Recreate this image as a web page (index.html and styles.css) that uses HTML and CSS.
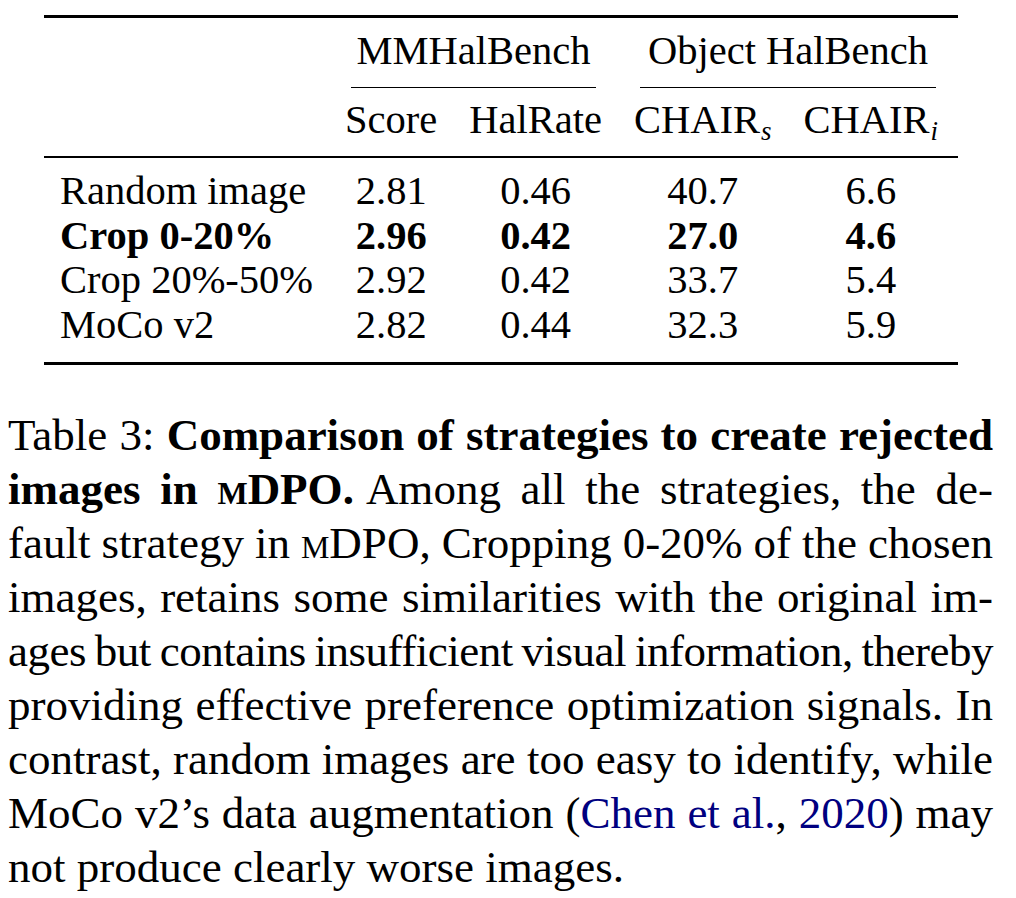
FILE: index.html
```html
<!DOCTYPE html>
<html lang="en">
<head>
<meta charset="utf-8">
<title>Table 3</title>
<link rel="stylesheet" href="styles.css">
</head>
<body>
<main class="figure">
  <table class="results">
    <thead>
      <tr class="group-row">
        <th class="label-cell"></th>
        <th class="group" colspan="2"><div class="group-label">MMHalBench</div></th>
        <th class="group" colspan="2"><div class="group-label">Object HalBench</div></th>
      </tr>
      <tr class="sub-row">
        <th class="label-cell"></th>
        <th>Score</th>
        <th>HalRate</th>
        <th>CHAIR<span class="sub">s</span></th>
        <th class="end-col">CHAIR<span class="sub">i</span></th>
      </tr>
    </thead>
    <tbody>
      <tr class="first">
        <td class="label-cell">Random image</td>
        <td>2.81</td><td>0.46</td><td>40.7</td><td class="end-col">6.6</td>
      </tr>
      <tr class="best">
        <td class="label-cell">Crop 0-20%</td>
        <td>2.96</td><td>0.42</td><td>27.0</td><td class="end-col">4.6</td>
      </tr>
      <tr>
        <td class="label-cell">Crop 20%-50%</td>
        <td>2.92</td><td>0.42</td><td>33.7</td><td class="end-col">5.4</td>
      </tr>
      <tr class="last">
        <td class="label-cell">MoCo v2</td>
        <td>2.82</td><td>0.44</td><td>32.3</td><td class="end-col">5.9</td>
      </tr>
    </tbody>
  </table>

  <p class="caption">
    <span class="line">Table 3: <strong>Comparison of strategies to create rejected</strong></span>
    <span class="line"><strong>images in <span class="sc">mDPO</span>.</strong><span class="quad"></span>Among all the strategies, the de-</span>
    <span class="line tight">fault strategy in <span class="sc">mDPO</span>, Cropping 0-20% of the chosen</span>
    <span class="line tight">images, retains some similarities with the original im-</span>
    <span class="line tighter">ages but contains insufficient visual information, thereby</span>
    <span class="line tight">providing effective preference optimization signals. In</span>
    <span class="line tight">contrast, random images are too easy to identify, while</span>
    <span class="line tight">MoCo v2’s data augmentation (<a class="cite" href="#">Chen et al.</a>, <a class="cite" href="#">2020</a>) may</span>
    <span class="line last-line">not produce clearly worse images.</span>
  </p>
</main>
</body>
</html>
```

FILE: styles.css
```css
html, body {
  background: #ffffff;
}

body {
  margin: 8px;
  color: #000000;
  font-family: "Liberation Serif", "Times New Roman", serif;
}

.figure {
  width: 985px;
  padding-top: 7px;
}

/* ---------- table ---------- */
.results {
  border-collapse: separate;
  border-spacing: 0;
  margin-left: 36px;
  font-size: 40.5px;
  line-height: 44.5px;
}

.results th,
.results td {
  padding: 0 16px;
  font-weight: normal;
  text-align: center;
  white-space: nowrap;
  vertical-align: baseline;
}

.results .label-cell {
  text-align: left;
}

.results .end-col {
  padding-right: 20px;
}

.group-row th {
  border-top: 3px solid #000;
  padding-top: 11px;
}

.group-label {
  margin: 0 6px;
  padding-bottom: 13.5px;
  border-bottom: 1px solid #000;
}

.sub-row th {
  padding-top: 10px;
  padding-bottom: 13.5px;
  border-bottom: 2px solid #000;
}

.sub {
  font-style: italic;
  font-size: 27px;
  line-height: 0;
  position: relative;
  top: 7px;
  margin-left: 1px;
}

tbody tr.first td {
  padding-top: 11px;
}

tbody tr.last td {
  padding-bottom: 15px;
  border-bottom: 3px solid #000;
}

tr.best td {
  font-weight: bold;
}

/* ---------- caption ---------- */
.caption {
  margin: 43px 0 0;
  font-size: 45px;
  line-height: 54px;
}

.caption .line {
  display: block;
  white-space: nowrap;
  text-align: justify;
  text-align-last: justify;
}

.caption .tight {
  word-spacing: -5px;
}

.caption .tighter {
  word-spacing: -6px;
  letter-spacing: -0.5px;
}

.caption .last-line {
  text-align-last: left;
}

.caption strong {
  font-weight: bold;
}

.sc {
  font-variant: small-caps;
}

.quad {
  display: inline-block;
  width: 12px;
}

.cite {
  color: #000080;
  text-decoration: none;
}
```
